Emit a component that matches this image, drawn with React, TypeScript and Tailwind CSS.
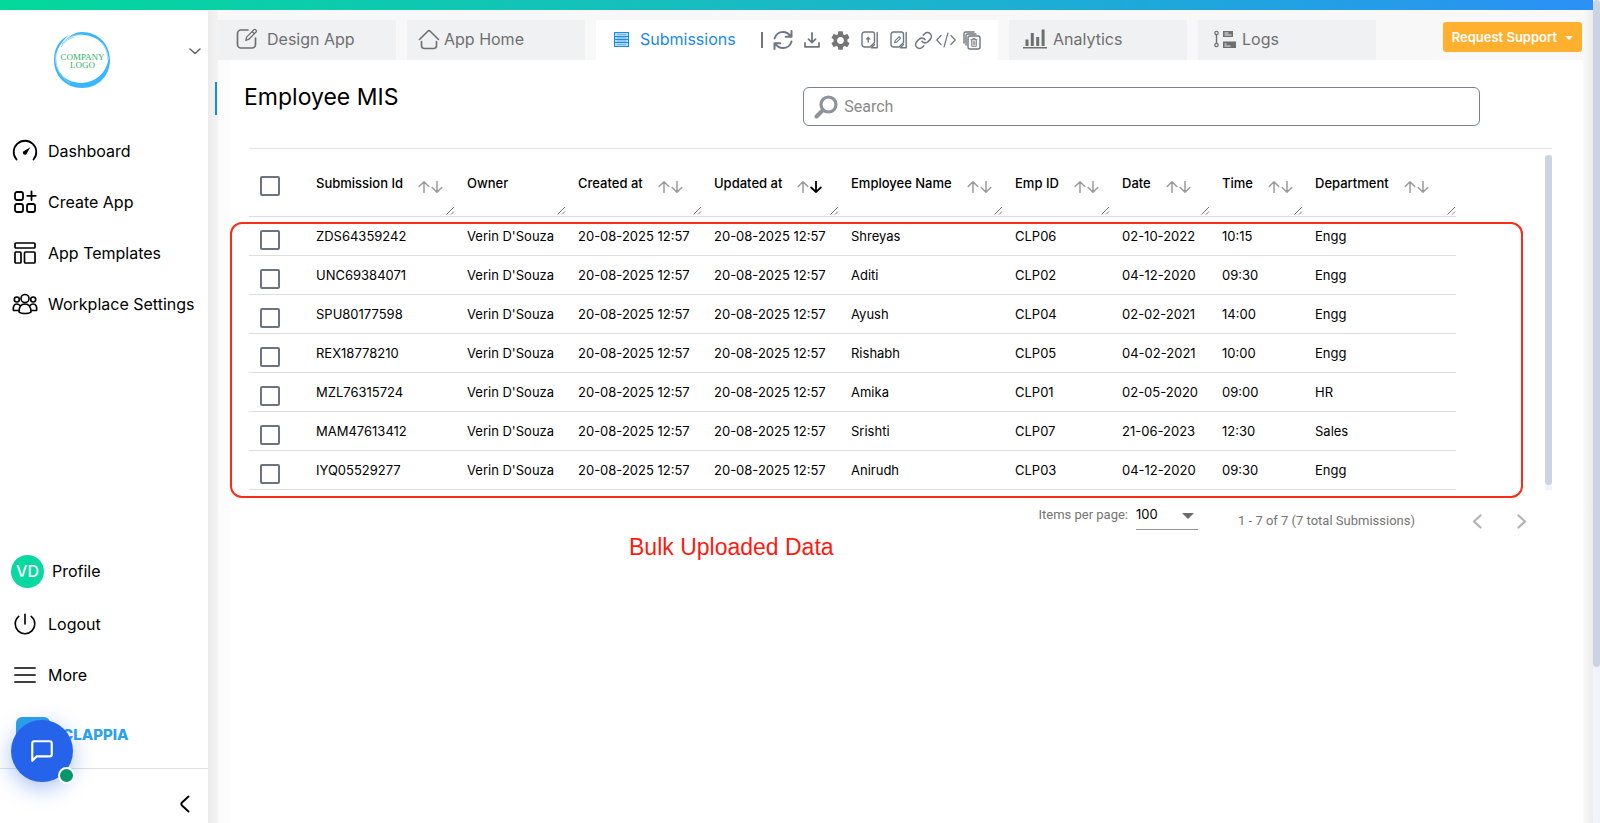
import React from "react";
import { IoPowerOutline } from "react-icons/io5";
import { MdSettings } from "react-icons/md";

type Sort = "none" | "idle" | "desc";

const columns: { label: string; width: string; sort: Sort }[] = [
  { label: "Submission Id", width: "w-[151px]", sort: "idle" },
  { label: "Owner", width: "w-[111px]", sort: "none" },
  { label: "Created at", width: "w-[136px]", sort: "idle" },
  { label: "Updated at", width: "w-[137px]", sort: "desc" },
  { label: "Employee Name", width: "w-[164px]", sort: "idle" },
  { label: "Emp ID", width: "w-[107px]", sort: "idle" },
  { label: "Date", width: "w-[100px]", sort: "idle" },
  { label: "Time", width: "w-[93px]", sort: "idle" },
  { label: "Department", width: "w-[153px]", sort: "idle" },
];

const stamp = "20-08-2025 12:57";
const owner = "Verin D'Souza";
const rows: string[][] = [
  ["ZDS64359242", owner, stamp, stamp, "Shreyas", "CLP06", "02-10-2022", "10:15", "Engg"],
  ["UNC69384071", owner, stamp, stamp, "Aditi", "CLP02", "04-12-2020", "09:30", "Engg"],
  ["SPU80177598", owner, stamp, stamp, "Ayush", "CLP04", "02-02-2021", "14:00", "Engg"],
  ["REX18778210", owner, stamp, stamp, "Rishabh", "CLP05", "04-02-2021", "10:00", "Engg"],
  ["MZL76315724", owner, stamp, stamp, "Amika", "CLP01", "02-05-2020", "09:00", "HR"],
  ["MAM47613412", owner, stamp, stamp, "Srishti", "CLP07", "21-06-2023", "12:30", "Sales"],
  ["IYQ05529277", owner, stamp, stamp, "Anirudh", "CLP03", "04-12-2020", "09:30", "Engg"],
];

type SvgProps = { className?: string; children: React.ReactNode; box?: string; sw?: number };

function Line({ className, children, box = "0 0 24 24", sw = 2 }: SvgProps) {
  return (
    <svg viewBox={box} className={className} fill="none" stroke="currentColor" strokeWidth={sw} strokeLinecap="round" strokeLinejoin="round" aria-hidden="true">
      {children}
    </svg>
  );
}

function CompanyLogo() {
  return (
    <svg viewBox="0 0 60 60" className="size-[60px]" role="img" aria-label="Company logo">
      <path d="M30 2 C46 2 58 14 58 30 C58 46 46 58 30 58 C14 58 2 46 2 30 C2 18 8 9 17 5 C10 11 4 19 3.500 30 C4 44 16 53 30 53 C43 52 54 44 56.500 29 C56 15 45 6 32 5 C25 4 19 6 14 10 C18 5 24 2 30 2 Z" fill="#38b6ff" />
      <path d="M10 14 C15 7 23 4 31 5 M9 17 C13 11 18 8 22 7 M50 13 C54 18 56 24 56 30 M4 24 C2 36 9 48 18 53" fill="none" stroke="#8fd3fb" strokeWidth="1" />
      <text x="30.500" y="30" textAnchor="middle" fontSize="9" fontFamily="Liberation Serif, serif" fill="#2fb468">COMPANY</text>
      <text x="30.500" y="38" textAnchor="middle" fontSize="9" fontFamily="Liberation Serif, serif" fill="#2fb468">LOGO</text>
    </svg>
  );
}

function GaugeIcon() {
  return (
    <Line className="size-[26px]" box="0 0 26 26" sw={1.8}>
      <path d="M4.500 21.500A11.300 11.300 0 1 1 21.500 21.500" />
      <path d="M18.300 9.200l-3.500 6.200a2 2 0 1 1-2.800-2.400Z" fill="currentColor" stroke="none" />
    </Line>
  );
}

function CreateIcon() {
  return (
    <Line className="size-6" sw={1.8}>
      <rect x="2" y="2" width="8" height="8" rx="2" />
      <rect x="2" y="14" width="8" height="8" rx="2" />
      <rect x="14" y="14" width="8" height="8" rx="2" />
      <path d="M18.500 1.500v8.500M14.200 5.800h8.500" />
    </Line>
  );
}

function TemplateIcon() {
  return (
    <Line className="size-6" sw={1.7}>
      <rect x="2" y="2" width="20" height="5" rx="1" />
      <rect x="2" y="11" width="6" height="11" rx="1" />
      <rect x="11.500" y="11" width="10.500" height="11" rx="1" />
    </Line>
  );
}

function PeopleIcon() {
  return (
    <Line className="h-6 w-[26px]" box="0 0 26 24" sw={1.6}>
      <circle cx="13" cy="6.500" r="4" />
      <circle cx="4.800" cy="7.500" r="2.500" />
      <circle cx="21.200" cy="7.500" r="2.500" />
      <path d="M7 20c0-4.500 2-8 6-8s6 3.500 6 8c-2 2-10 2-12 0Z" />
      <path d="M6.800 18.500H1.400c-.5-3.500.6-6.500 3.400-6.500 1.400 0 2.400.5 3.200 1.500M19.200 18.500h5.400c.5-3.500-.6-6.500-3.400-6.500-1.400 0-2.400.5-3.200 1.500" />
    </Line>
  );
}

function EditSquare() {
  return (
    <Line className="size-[22px]" box="0 0 22 22" sw={1.7}>
      <path d="M12 2H5a3.500 3.500 0 0 0-3.500 3.500v11A3.500 3.500 0 0 0 5 20h11a3.500 3.500 0 0 0 3.500-3.500V10" />
      <path strokeWidth="1.300" d="M9.800 12.500l.8-3.400L18 1.600c1-.8 3 1 2.200 2.100L13 11.200ZM16.200 3.500l2.200 2.200" />
    </Line>
  );
}

function HomeIcon() {
  return (
    <Line className="size-[22px]" box="0 0 22 22" sw={1.6}>
      <path d="M1.500 11.500L9.800 3.200c.8-.8 1.600-.8 2.400 0l8.300 8.300M3.500 13.500v4a3 3 0 0 0 3 3h9a3 3 0 0 0 3-3v-4" />
    </Line>
  );
}

function ListIcon() {
  return (
    <svg viewBox="0 0 15 15" className="size-[15px]" fill="none" stroke="#1789f3" aria-hidden="true">
      <rect x=".5" y=".5" width="14" height="14" fill="#b9dcfb" />
      <path d="M1 4.500h13M1 7.500h13M1 10.500h13" strokeWidth="1.200" />
      <path d="M3 2.500h9M3 6h9M3 9h9M3 12.500h9" stroke="#4ba5f6" strokeWidth=".7" />
    </svg>
  );
}

function ChartIcon() {
  return (
    <svg viewBox="0 0 24 20" className="h-5 w-6" fill="#6f6f6f" aria-hidden="true">
      <path d="M0 18h24v1.600H0ZM2.500 10.500h3v6.500h-3ZM7.800 4h3v13h-3ZM13.200 8h3v9h-3ZM18.600.5h3V17h-3Z" />
    </svg>
  );
}

function LogsIcon() {
  return (
    <svg viewBox="0 0 22 20" className="h-5 w-[22px]" fill="none" stroke="#6f6f6f" aria-hidden="true">
      <circle cx="2.500" cy="4" r="1.700" strokeWidth="1.200" />
      <circle cx="2.500" cy="16" r="1.700" strokeWidth="1.200" />
      <path d="M2.500 6v8" strokeWidth="1.400" />
      <path d="M9 2h10v6H9ZM9 12.500h13v6.500H9Z" fill="#6f6f6f" stroke="none" />
      <path d="M10.500 4h4M10.500 6h7M10.500 17h6M10.500 15h2" stroke="#f0f1f2" strokeWidth="1" />
    </svg>
  );
}

function BookIcon({ kind }: { kind: "upload" | "edit" }) {
  return (
    <Line className="h-[18px] w-[17px]" box="0 0 17 18" sw={1.4}>
      <path d="M11.500 1H3.500A2.500 2.500 0 0 0 1 3.500v10A2.500 2.500 0 0 0 3.500 16H9l4.500-4.500V3a2 2 0 0 0-2-2Z" />
      <path d="M16.200 1.500v15.300H10.500M13.500 13.500l-3 3" />
      {kind === "upload" ? (
        <>
          <path d="M7.200 11V7.500" />
          <path d="M5.300 8l1.900-2.300L9.100 8Z" fill="currentColor" strokeWidth=".6" />
        </>
      ) : (
        <path strokeWidth="1.100" d="M4.600 11.800l.6-2.200 3.900-3.900 1.500 1.500-3.900 3.900Z" />
      )}
    </Line>
  );
}

function TrashCopyIcon() {
  return (
    <Line className="h-[19px] w-[18px]" box="0 0 18 19" sw={1.4}>
      <path d="M1 12V2.500A1.500 1.500 0 0 1 2.500 1H11M3 14V4.500A1.500 1.500 0 0 1 4.500 3H13" />
      <rect x="5" y="5" width="12" height="13" rx="2" />
      <path d="M8 8.800h6M9.800 8.500v-1h2.400v1M8.700 9v6.300h4.600V9M10.200 10.500v3.300M11.800 10.500v3.300" strokeWidth=".9" />
    </Line>
  );
}

function Tools() {
  const items: { name: string; icon: React.ReactNode; gap: string }[] = [
    {
      name: "Refresh",
      gap: "ml-[10px]",
      icon: (
        <Line className="size-5" box="0 0 20 20" sw={2}>
          <path d="M1.500 8.500C2.500 4.500 6 1.900 10 1.900c3.200 0 6 1.600 7.500 4.300M18.500 1v5.800h-5.800M18.500 11.500c-1 4-4.500 6.600-8.500 6.600-3.200 0-6-1.600-7.500-4.300M1.500 19v-5.800H7.300" />
        </Line>
      ),
    },
    {
      name: "Download",
      gap: "ml-[11px]",
      icon: (
        <Line className="size-4" box="0 0 16 16" sw={1.8}>
          <path d="M8 1v9.500M4.500 7.200L8 10.600l3.500-3.400M1 11v3.800h14V11" />
        </Line>
      ),
    },
    { name: "Settings", gap: "ml-[9px]", icon: <MdSettings className="size-[23px] text-[#757575]" /> },
    { name: "Bulk upload", gap: "ml-[9px]", icon: <BookIcon kind="upload" /> },
    { name: "Bulk edit", gap: "ml-[12px]", icon: <BookIcon kind="edit" /> },
    {
      name: "Copy link",
      gap: "ml-[7px]",
      icon: (
        <Line className="size-[19px]">
          <path d="M10 13a5 5 0 0 0 7.540.540l3-3a5 5 0 0 0-7.070-7.070l-1.720 1.710" />
          <path d="M14 11a5 5 0 0 0-7.540-.540l-3 3a5 5 0 0 0 7.070 7.070l1.710-1.710" />
        </Line>
      ),
    },
    {
      name: "Embed code",
      gap: "ml-[3px]",
      icon: (
        <Line className="h-4 w-5" box="0 0 20 16" sw={1.2}>
          <path d="M5 3.500L.8 8 5 12.500M15 3.500L19.200 8 15 12.500M12 1L8 15" />
        </Line>
      ),
    },
    { name: "Bulk delete", gap: "ml-[7px]", icon: <TrashCopyIcon /> },
  ];
  return (
    <div className="ml-[25px] flex items-center text-[#707780]">
      <span className="h-4 w-[2px] bg-[#757575]" />
      {items.map((t) => (
        <button key={t.name} aria-label={t.name} className={t.gap}>
          {t.icon}
        </button>
      ))}
    </div>
  );
}

function Sidebar() {
  const nav = [
    { label: "Dashboard", icon: <GaugeIcon /> },
    { label: "Create App", icon: <CreateIcon /> },
    { label: "App Templates", icon: <TemplateIcon /> },
    { label: "Workplace Settings", icon: <PeopleIcon /> },
  ];
  return (
    <aside className="relative flex w-[208px] shrink-0 flex-col bg-white text-base text-black">
      <div className="flex items-start justify-between pt-5 pl-[52px] pr-[7px]">
        <CompanyLogo />
        <button aria-label="Switch workplace" className="mt-[15px] text-[#5f6368]">
          <Line className="size-3" box="0 0 12 12" sw={1.5}>
            <path d="M1 4l5 4.500L11 4" />
          </Line>
        </button>
      </div>
      <nav className="mt-[35px] flex flex-col">
        {nav.map((n) => (
          <a key={n.label} href="#" className="flex h-[51px] items-center gap-[10px] pl-3 whitespace-nowrap">
            <span className="flex w-[26px] justify-center">{n.icon}</span>
            {n.label}
          </a>
        ))}
      </nav>
      <div className="mt-auto flex flex-col">
        <a href="#" className="flex h-[54px] items-center gap-2 pl-[11px]">
          <span className="flex size-[33px] items-center justify-center rounded-full bg-[#09d8a0] font-medium text-white">VD</span>
          Profile
        </a>
        <a href="#" className="flex h-[51px] items-center gap-[10px] pl-3">
          <IoPowerOutline className="size-[26px]" />
          Logout
        </a>
        <a href="#" className="flex h-[51px] items-center gap-[10px] pl-3">
          <Line className="size-[26px]" box="0 0 26 26" sw={1.7}>
            <path d="M3 6h20M3 13h20M3 20h20" />
          </Line>
          More
        </a>
      </div>
      <a href="#" className="mt-[17px] flex h-[51px] items-start pl-4">
        <span className="size-[34px] rounded-md bg-[#2ba3e8]" />
        <span className="mt-[8px] ml-3 text-[15px] leading-5 font-extrabold text-[#2ba3e8]">CLAPPIA</span>
      </a>
      <div className="flex h-[55px] items-start justify-end border-t border-[#dfe1e3] pt-[26px] pr-[18px]">
        <button aria-label="Collapse sidebar">
          <Line className="h-[18px] w-[10px]" box="0 0 10 18" sw={1.9}>
            <path d="M8.500 1.500L2 7.500c-1 1-1 2 0 3l6.500 6" />
          </Line>
        </button>
      </div>
      <button aria-label="Open chat" className="absolute bottom-[41px] left-[11px] flex size-[62px] items-center justify-center rounded-full bg-[#2563eb] text-white shadow-[0_6px_22px_rgba(37,99,235,0.4)]">
        <Line className="size-[26px]">
          <path d="M21 15a2 2 0 0 1-2 2H7l-4 4V5a2 2 0 0 1 2-2h14a2 2 0 0 1 2 2z" />
        </Line>
        <span className="absolute -right-[2px] -bottom-[2px] size-[17px] rounded-full border-2 border-white bg-[#079669]" />
      </button>
    </aside>
  );
}

const tabClass = "flex h-10 w-[178px] shrink-0 items-center bg-[#f0f1f2] text-[#6f6f6f]";

function TabBar() {
  return (
    <div className="flex h-[50px] items-end justify-between bg-[#f8f8f8]">
      <nav className="flex gap-[11px] text-base">
        <a href="#" className={`${tabClass} gap-[9px] pl-[18px] pb-[2px]`}>
          <EditSquare />
          Design App
        </a>
        <a href="#" className={`${tabClass} gap-1 pl-[11px] pb-[2px]`}>
          <HomeIcon />
          App Home
        </a>
        <div className="flex h-10 w-[402px] shrink-0 items-center bg-white pl-[18px]">
          <a href="#" className="flex items-center gap-[11px] pb-[2px] text-[#1789f3]">
            <ListIcon />
            Submissions
          </a>
          <Tools />
        </div>
        <a href="#" className={`${tabClass} gap-[6px] pl-[14px] pb-[2px]`}>
          <ChartIcon />
          Analytics
        </a>
        <a href="#" className={`${tabClass} gap-[6px] pl-4 pb-[2px]`}>
          <LogsIcon />
          Logs
        </a>
      </nav>
      <button className="mr-[1px] mb-2 flex h-[30px] items-center gap-2 rounded-[3px] bg-[#ffb02e] px-[9px] pt-[1px] text-[13px] font-semibold whitespace-nowrap text-white">
        Request Support
        <svg viewBox="0 0 8 4" className="h-1 w-2" fill="currentColor" aria-hidden="true">
          <path d="M0 0h8L4 4Z" />
        </svg>
      </button>
    </div>
  );
}

function SortArrows({ sort }: { sort: Sort }) {
  return (
    <button aria-label="Sort" className="mt-[7px] ml-[15px] flex gap-[1px] text-[#9b9b9b]">
      <Line className="size-3" box="0 0 12 12" sw={1.5}>
        <path d="M6 11.500V1M1.200 5.500L6 .8l4.800 4.700" />
      </Line>
      <Line className={sort === "desc" ? "size-3 text-black" : "size-3"} box="0 0 12 12" sw={sort === "desc" ? 1.8 : 1.5}>
        <path d="M6 .5V11M1.200 6.500L6 11.200l4.800-4.700" />
      </Line>
    </button>
  );
}

const boxClass = "block size-5 appearance-none rounded-[2px] border-2 border-[#6b7480] bg-white";

function DataTable() {
  return (
    <table className="w-full table-fixed border-separate border-spacing-0 text-left text-[13px] text-black">
      <colgroup>
        <col className="w-[55px]" />
        {columns.map((c) => (
          <col key={c.label} className={c.width} />
        ))}
      </colgroup>
      <thead>
        <tr className="h-[62px]">
          <th className="border-b border-[#dedede] p-0 pl-[11px]">
            <input type="checkbox" aria-label="Select all" className={boxClass} />
          </th>
          {columns.map((c) => (
            <th key={c.label} className="relative border-b border-[#dedede] p-0 pl-3 font-medium whitespace-nowrap">
              <div className="flex h-5 items-center pb-[4px]">
                {c.label}
                {c.sort !== "none" && <SortArrows sort={c.sort} />}
              </div>
              <svg viewBox="0 0 9 9" className="absolute right-0 bottom-[1px] size-[9px]" stroke="#777" strokeWidth="1" aria-hidden="true">
                <path d="M.5 8.500L8 1M5 8.500L8 5.500" />
              </svg>
            </th>
          ))}
        </tr>
      </thead>
      <tbody>
        {rows.map((r) => (
          <tr key={r[0]} className="h-[39px]">
            <td className="border-b border-[#dedede] p-0 pt-[7px] pl-[11px]">
              <input type="checkbox" aria-label={`Select ${r[0]}`} className={boxClass} />
            </td>
            {r.map((v, i) => (
              <td key={i} className="border-b border-[#dedede] p-0 pt-[1px] pl-3 whitespace-nowrap">
                {v}
              </td>
            ))}
          </tr>
        ))}
      </tbody>
    </table>
  );
}

function Pager() {
  return (
    <div className="flex items-start justify-end pt-3 pr-[56px] font-[Roboto,sans-serif] text-[13px] text-[#757575]">
      <label htmlFor="size" className="mt-[3px] leading-5">Items per page:</label>
      <div className="ml-2 flex h-7 w-[62px] items-center justify-between border-b border-[#949494] pr-1">
        <select id="size" defaultValue="100" className="w-10 appearance-none bg-transparent pb-[2px] font-[Inter,sans-serif] text-[13px] text-black">
          <option>100</option>
        </select>
        <svg viewBox="0 0 12 6" className="h-[6px] w-3 shrink-0" fill="#6b6b6b" aria-hidden="true">
          <path d="M0 0h12L6 6Z" />
        </svg>
      </div>
      <span className="mt-[9px] ml-[40px] leading-5 whitespace-nowrap">1 - 7 of 7 (7 total Submissions)</span>
      <button aria-label="Previous page" className="mt-3 ml-[57px] text-[#b3b3b3]">
        <Line className="h-[15px] w-[10px]" box="0 0 10 15" sw={2.2}>
          <path d="M8.500 1.500L2 7.500l6.500 6" />
        </Line>
      </button>
      <button aria-label="Next page" className="mt-3 ml-[35px] text-[#b3b3b3]">
        <Line className="h-[15px] w-[10px]" box="0 0 10 15" sw={2.2}>
          <path d="M1.500 1.500L8 7.500l-6.500 6" />
        </Line>
      </button>
    </div>
  );
}

export default function App() {
  return (
    <div className="flex h-screen overflow-hidden bg-white font-[Inter,sans-serif]">
      <div className="flex min-w-0 flex-1 flex-col">
        <div className="h-[10px] shrink-0 bg-linear-to-r from-[#05d89a] via-[#1ab9c4] to-[#2b90f5]" />
        <div className="flex min-h-0 flex-1">
          <Sidebar />
          <div className="w-[10px] shrink-0 bg-linear-to-r from-[#ececec] to-[#f3f3f3]" />
          <main className="min-w-0 flex-1">
            <TabBar />
            <div className="flex h-full">
              <div className="w-3 shrink-0 bg-[#fcfcfc]" />
              <div className="min-w-0 flex-1">
                <div className="-ml-[15px] flex items-start pt-[22px]">
                  <h1 className="flex h-[33px] w-[43%] items-center border-l-2 border-[#1789f3] pb-[3px] pl-[27px] text-[23px]">Employee MIS</h1>
                  <label className="mt-[5px] mr-[103px] flex h-[39px] flex-1 items-center gap-[6px] rounded-md border border-[#7a828c] pl-[10px]">
                    <Line className="size-6 text-[#8d9399]" sw={3.2}>
                      <circle cx="14.500" cy="9.500" r="7.500" />
                      <path d="M8.500 15.500L2.500 21.500" strokeWidth="4" />
                    </Line>
                    <input type="text" placeholder="Search" aria-label="Search" className="min-w-0 flex-1 bg-transparent font-[Roboto,sans-serif] text-base outline-none placeholder:text-[#8a8a8a]" />
                  </label>
                </div>
                <section className="relative mt-[22px] mr-[31px] ml-[19px] flex border-t border-[#e4e4e4] pt-[6px]">
                  <div className="min-w-0 flex-1 pr-[89px]">
                    <DataTable />
                  </div>
                  <div className="w-[7px] bg-[#f1f5f9] pb-[5px]">
                    <div className="h-full rounded-full bg-[#cbd5e1]" />
                  </div>
                  <div className="pointer-events-none absolute top-[73px] right-[29px] -bottom-[8px] -left-[19px] rounded-xl border-2 border-[#fb2c14]" />
                </section>
                <Pager />
                <p className="ml-[399px] text-[23px] leading-8 text-[#ff1a10] font-[Liberation_Sans,sans-serif]">Bulk Uploaded Data</p>
              </div>
            </div>
          </main>
          <div className="w-[10px] shrink-0 bg-linear-to-r from-[#fafafa] to-[#ececec]" />
        </div>
      </div>
      <div className="w-[7px] shrink-0 bg-[#f1f5f9]">
        <div className="h-[81%] rounded-full bg-[#cbd5e1]" />
      </div>
    </div>
  );
}
